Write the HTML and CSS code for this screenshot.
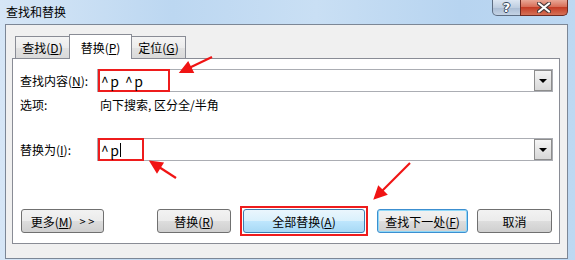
FILE: index.html
```html
<!DOCTYPE html>
<html lang="zh-CN">
<head>
    <meta charset="UTF-8">
    <meta name="viewport" content="width=device-width, initial-scale=1.0">
    <title>查找和替换</title>
    <link rel="stylesheet" href="styles.css">
</head>
<body>
    <div class="window">
        <div class="titlebar">
            <span class="title">查找和替换</span>
            <div class="caption-btns">
                <span class="cap help">?</span>
                <span class="cap close">
                    <svg width="14" height="11" viewBox="0 0 14 11">
                        <path d="M2 1.5 L12 9.5 M12 1.5 L2 9.5" stroke="#4a3a3a" stroke-width="4.2" stroke-linecap="round"/>
                        <path d="M2 1.5 L12 9.5 M12 1.5 L2 9.5" stroke="#fff" stroke-width="2.2" stroke-linecap="round"/>
                    </svg>
                </span>
            </div>
        </div>
        <div class="dialog">
            <div class="tabs">
                <span class="tab">查找(<u>D</u>)</span>
                <span class="tab active">替换(<u>P</u>)</span>
                <span class="tab">定位(<u>G</u>)</span>
            </div>
            <div class="panel">
                <div class="row">
                    <label class="lbl">查找内容(<u>N</u>):</label>
                    <div class="combo">
                        <span class="mark find">^p ^p</span>
                        <span class="drop"></span>
                    </div>
                </div>
                <div class="row opts">
                    <span class="lbl wide">选项:</span>
                    <span>向下搜索, 区分全/半角</span>
                </div>
                <div class="row second">
                    <label class="lbl">替换为(<u>I</u>):</label>
                    <div class="combo">
                        <span class="mark repl">^p<i class="caret"></i></span>
                        <span class="drop"></span>
                    </div>
                </div>
                <div class="buttons">
                    <button class="btn more">更多(<u>M</u>)<span class="gt">&gt; &gt;</span></button>
                    <button class="btn one">替换(<u>R</u>)</button>
                    <span class="hl"><button class="btn all">全部替换(<u>A</u>)</button></span>
                    <button class="btn next">查找下一处(<u>F</u>)</button>
                    <button class="btn cancel">取消</button>
                </div>
            </div>
        </div>
        <svg class="arrows" width="575" height="260" viewBox="0 0 575 260">
            <g stroke="#f01414" stroke-width="2.2" fill="#f01414">
                <line x1="212" y1="57" x2="189" y2="68"/>
                <polygon points="181,72 192.5,72 188,63"/>
                <line x1="176" y1="178" x2="159" y2="167"/>
                <polygon points="151,162 157,171.6 162.2,163.4"/>
                <line x1="410" y1="163" x2="382" y2="191"/>
                <polygon points="375,198 385.8,194.3 378.7,187.2"/>
            </g>
        </svg>
    </div>
</body>
</html>
```

FILE: styles.css
```css
body {
    margin: 0;
    font-family: "Noto Sans CJK SC", "Liberation Sans", sans-serif;
    font-size: 12px;
    color: #000;
}
.window {
    width: 575px;
    height: 260px;
    position: relative;
    overflow: hidden;
    background: linear-gradient(90deg, #d6e6f6 0%, #bcd7f1 30%, #c9dff4 55%, #b7d4f0 80%, #bdd8f2 100%);
}
.titlebar {
    height: 24px;
    display: flex;
    align-items: flex-start;
}
.title {
    margin: 4px 0 0 6px;
    line-height: 16px;
}
.caption-btns {
    margin-left: auto;
    margin-right: 7px;
    display: flex;
}
.cap {
    height: 16px;
    box-sizing: border-box;
    display: flex;
    align-items: center;
    justify-content: center;
    border: 1px solid #5d6d82;
    border-top: none;
}
.help {
    width: 29px;
    border-radius: 0 0 0 5px;
    background: linear-gradient(#dce6f2, #bfcee0 50%, #aabcd3 51%, #c4d3e5);
    color: #fff;
    font: bold 13px "DejaVu Sans", sans-serif;
    text-shadow: 0 0 1px #3a4a60, 1px 0 0 #3a4a60, -1px 0 0 #3a4a60, 0 1px 0 #3a4a60, 0 -1px 0 #3a4a60;
}
.close {
    width: 48px;
    margin-left: -1px;
    border-color: #6e2a22;
    border-radius: 0 0 5px 0;
    background: linear-gradient(#e9a796, #d86e58 45%, #c43d26 50%, #d67157);
}
.dialog {
    margin-left: 5px;
    width: 563px;
    height: 235px;
    box-sizing: border-box;
    border: 1px solid #7c8796;
    background: #f0f0f0;
    padding: 9px 6px 0 6px;
}
.tabs {
    display: flex;
    align-items: flex-end;
    height: 24px;
    margin-left: 3px;
}
.tab {
    width: 55px;
    height: 22px;
    box-sizing: border-box;
    margin-left: -1px;
    border: 1px solid #898c95;
    border-bottom: none;
    background: linear-gradient(#f4f4f4, #ececec 50%, #e2e2e2 51%, #dadada);
    display: flex;
    align-items: center;
    justify-content: center;
}
.tab:first-child { margin-left: 0; }
.tab.active {
    width: 63px;
    height: 25px;
    margin-bottom: -1px;
    background: #fff;
    position: relative;
    z-index: 1;
}
.panel {
    width: 548px;
    height: 186px;
    box-sizing: border-box;
    border: 1px solid #898c95;
    background: #fff;
    padding: 10px 0 0 7px;
}
.row {
    display: flex;
    align-items: center;
}
.lbl { width: 77px; }
.lbl.wide { width: 80px; }
.opts {
    margin-top: 4px;
    height: 16px;
}
.second { margin-top: 26px; }
.combo {
    width: 456px;
    height: 23px;
    box-sizing: border-box;
    border: 1px solid #abadb3;
    display: flex;
    background: #fff;
}
.mark {
    margin: -1px 0;
    height: 23px;
    box-sizing: border-box;
    border: 2px solid #ee1c1c;
    display: flex;
    align-items: center;
    padding-left: 1px;
    font-size: 14px;
    letter-spacing: 1.5px;
}
.mark.find { width: 72px; }
.mark.repl { width: 46px; }
.caret {
    display: inline-block;
    width: 1px;
    height: 14px;
    background: #000;
    margin-left: 0;
}
.drop {
    margin-left: auto;
    width: 18px;
    box-sizing: border-box;
    border: 1px solid #8d8d8d;
    background: linear-gradient(#f5f5f5, #e6e6e6 50%, #d8d8d8);
    display: flex;
    align-items: center;
    justify-content: center;
}
.drop::after {
    content: "";
    border-left: 4px solid transparent;
    border-right: 4px solid transparent;
    border-top: 4px solid #000;
}
.buttons {
    display: flex;
    margin-top: 48px;
}
.btn {
    height: 24px;
    box-sizing: border-box;
    padding: 0;
    border: 1px solid #707070;
    border-radius: 3px;
    background: linear-gradient(#f2f2f2, #ebebeb 50%, #dddddd 51%, #cfcfcf);
    font-family: inherit;
    font-size: 12px;
    color: #000;
    display: flex;
    align-items: center;
    justify-content: center;
}
.gt {
    margin-left: 7px;
    font-size: 11px;
}
.more { width: 83px; margin-left: 1px; }
.one { width: 74px; margin-left: 53px; }
.hl {
    margin: -3px 0 0 9px;
    padding: 1px;
    border: 2px solid #ee1c1c;
    height: 30px;
    box-sizing: border-box;
}
.all {
    width: 122px;
    border-color: #3c7fb1;
    background: linear-gradient(#eaf6fd, #d9f0fc 50%, #bee6fd 51%, #a7d9f5);
}
.next {
    width: 91px;
    margin-left: 9px;
    border-color: #3c8fd0;
    box-shadow: inset 0 0 0 1px #8fd8f8;
}
.cancel { width: 75px; margin-left: 9px; }
.arrows {
    position: absolute;
    top: 0;
    left: 0;
    pointer-events: none;
}
```
